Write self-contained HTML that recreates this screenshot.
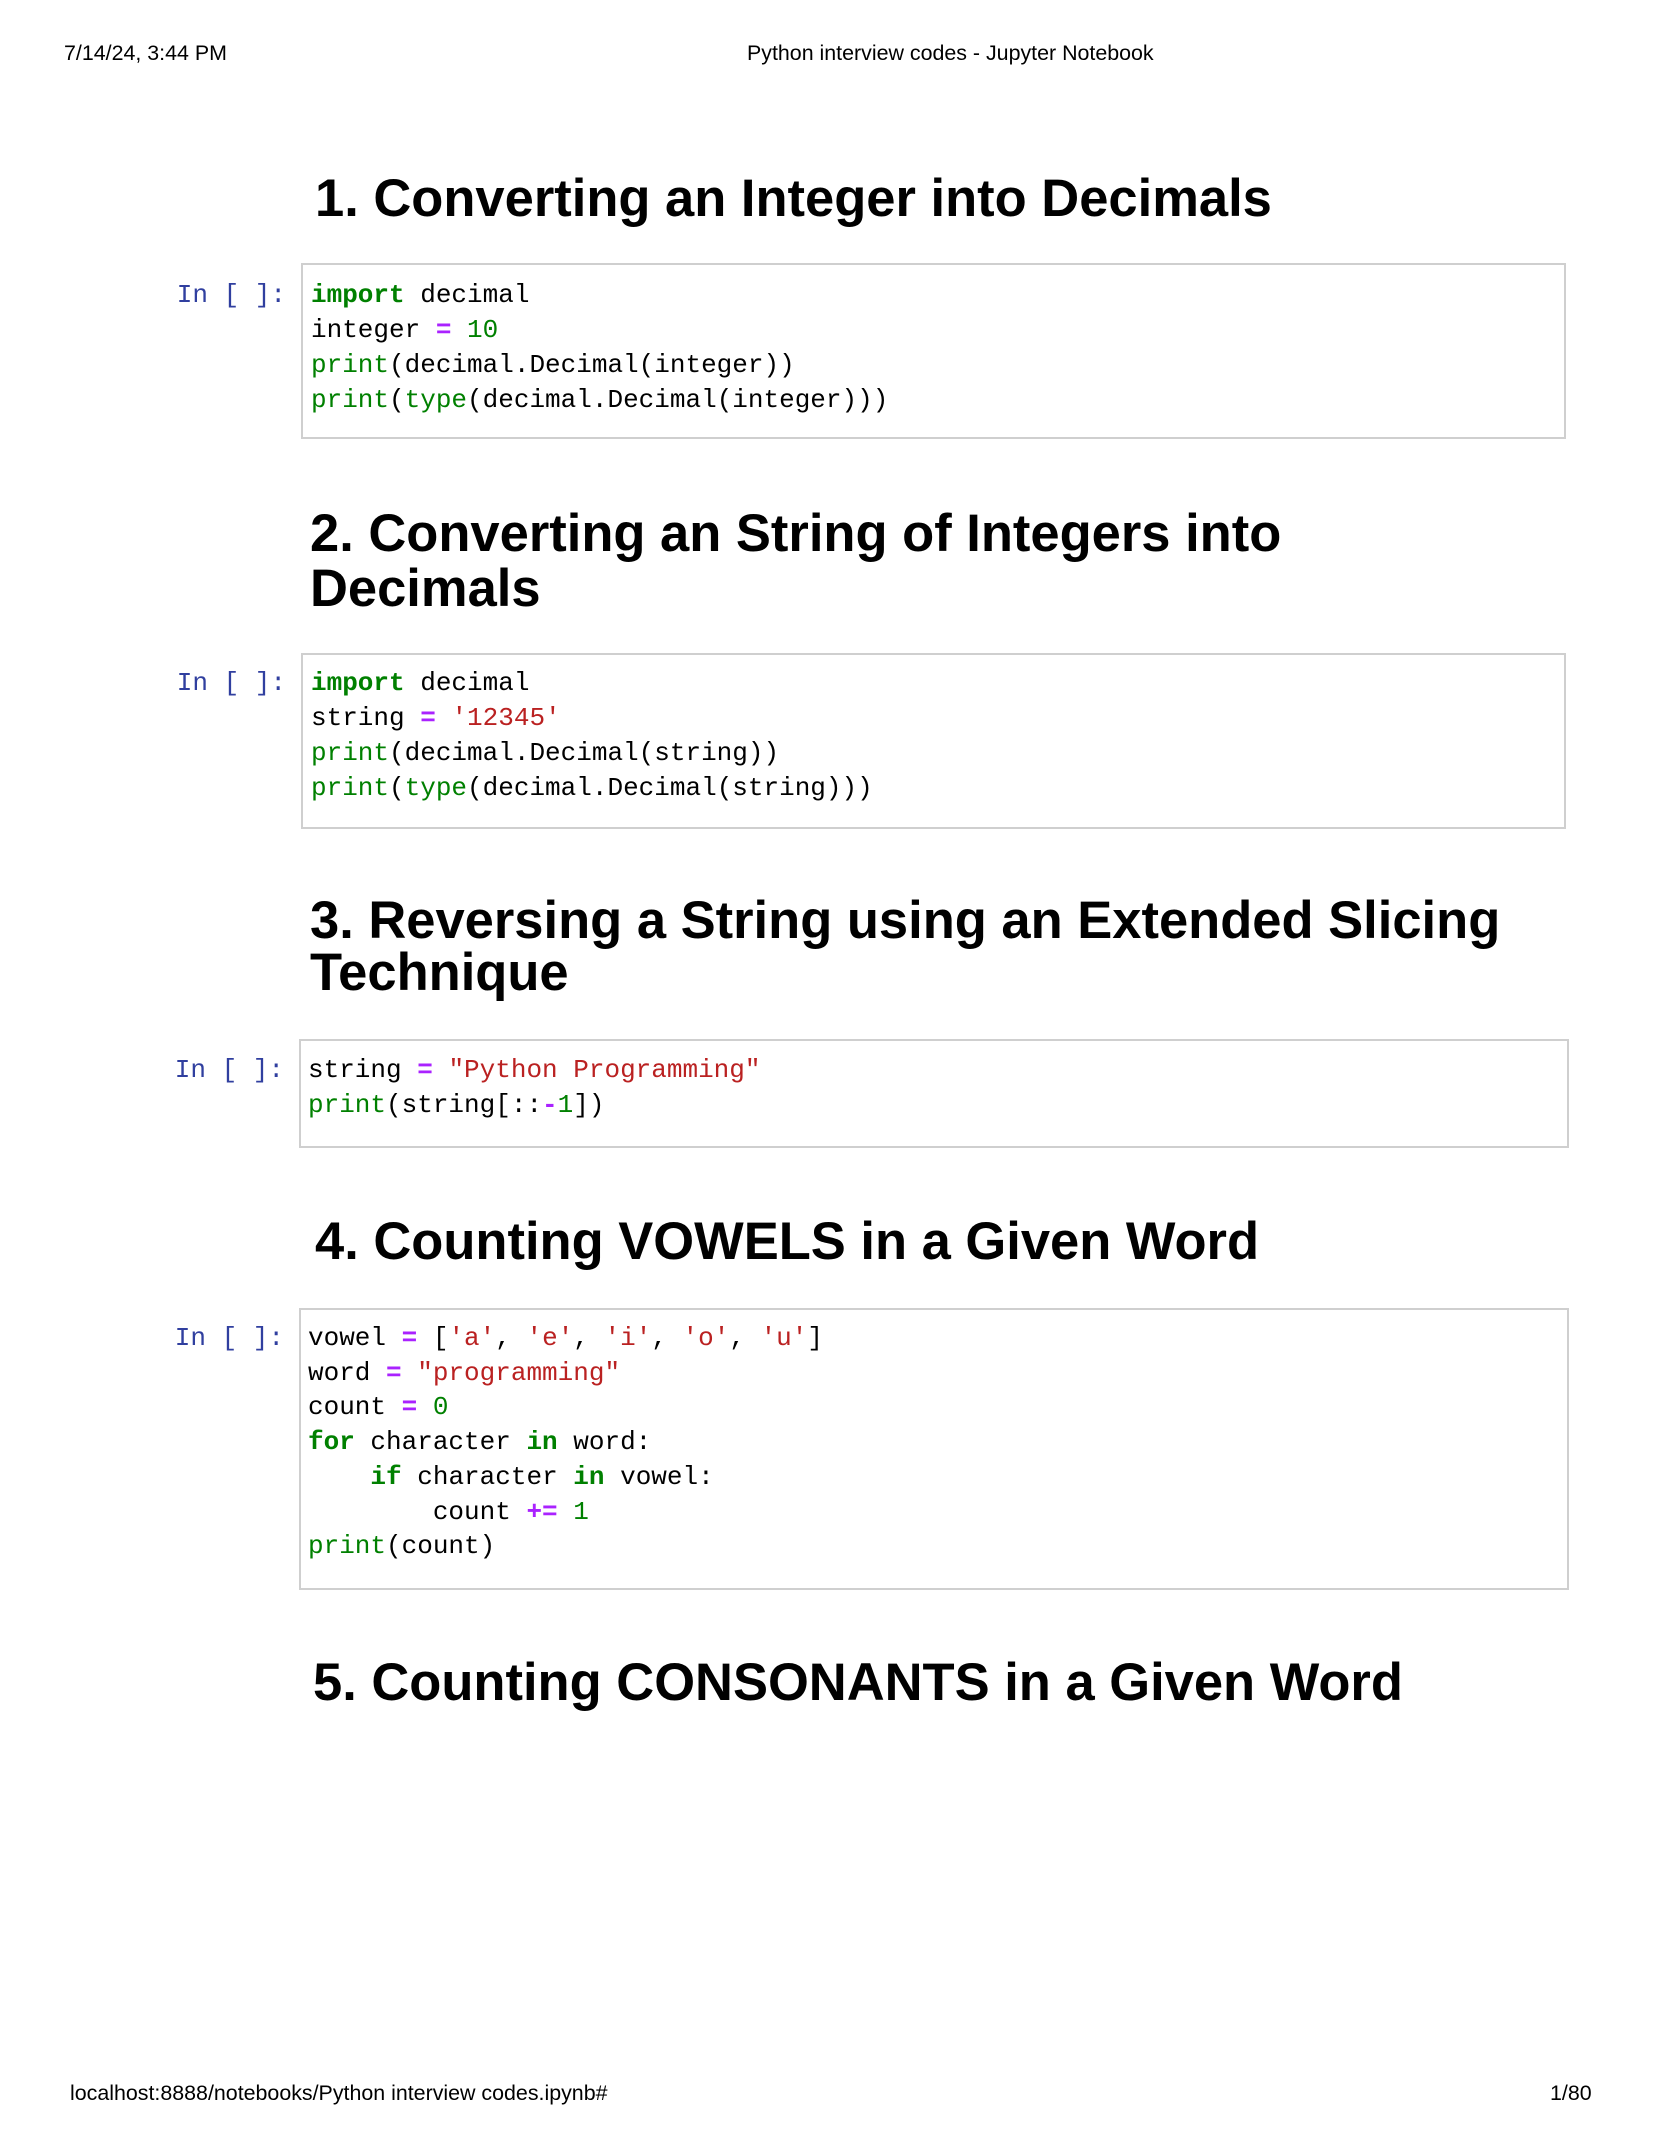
<!DOCTYPE html>
<html><head><meta charset="utf-8"><style>
body{margin:0;width:1653px;height:2139px;background:#fff;position:relative;font-family:"Liberation Sans",Arial,sans-serif;color:#000;overflow:hidden}
.a{position:absolute;white-space:pre}
.hd{font-size:21.4px;top:41px}
h1{position:absolute;margin:0;font-size:52.5px;font-weight:bold;white-space:pre;letter-spacing:0}
.box{position:absolute;border:2px solid #cfcfcf;background:#fff;box-sizing:border-box}
.code{position:absolute;font-family:"Liberation Mono","DejaVu Sans Mono",monospace;font-size:26px;white-space:pre;color:#000}
.pr{position:absolute;font-family:"Liberation Mono",monospace;font-size:26px;color:#303F9F;white-space:pre;text-align:right;width:140px}
.k{color:#008000;font-weight:bold}.b{color:#008000}.o{color:#AA22FF;font-weight:bold}.s{color:#BA2121}.n{color:#008000}
</style></head><body>
<div class="a hd" style="left:64px">7/14/24, 3:44 PM</div>
<div class="a hd" style="left:747px">Python interview codes - Jupyter Notebook</div>

<h1 style="left:315px;top:173px;line-height:51px">1. Converting an Integer into Decimals</h1>
<div class="box" style="left:301px;top:263px;width:1265px;height:176px"></div>
<div class="pr" style="left:146px;top:278px;line-height:35px">In [ ]:</div>
<div class="code" style="left:311px;top:278px;line-height:35px"><span class="k">import</span> decimal
integer <span class="o">=</span> <span class="n">10</span>
<span class="b">print</span>(decimal.Decimal(integer))
<span class="b">print</span>(<span class="b">type</span>(decimal.Decimal(integer)))</div>

<h1 style="left:310px;top:506px;line-height:55px">2. Converting an String of Integers into
Decimals</h1>
<div class="box" style="left:301px;top:653px;width:1265px;height:176px"></div>
<div class="pr" style="left:146px;top:666px;line-height:35px">In [ ]:</div>
<div class="code" style="left:311px;top:666px;line-height:35px"><span class="k">import</span> decimal
string <span class="o">=</span> <span class="s">'12345'</span>
<span class="b">print</span>(decimal.Decimal(string))
<span class="b">print</span>(<span class="b">type</span>(decimal.Decimal(string)))</div>

<h1 style="left:310px;top:895px;line-height:52px">3. Reversing a String using an Extended Slicing
Technique</h1>
<div class="box" style="left:299px;top:1039px;width:1270px;height:109px"></div>
<div class="pr" style="left:144px;top:1053px;line-height:35px">In [ ]:</div>
<div class="code" style="left:308px;top:1053px;line-height:35px">string <span class="o">=</span> <span class="s">"Python Programming"</span>
<span class="b">print</span>(string[::<span class="o">-</span><span class="n">1</span>])</div>

<h1 style="left:315px;top:1216px;line-height:51px">4. Counting VOWELS in a Given Word</h1>
<div class="box" style="left:299px;top:1308px;width:1270px;height:282px"></div>
<div class="pr" style="left:144px;top:1321px;line-height:34.7px">In [ ]:</div>
<div class="code" style="left:308px;top:1321px;line-height:34.7px">vowel <span class="o">=</span> [<span class="s">'a'</span>, <span class="s">'e'</span>, <span class="s">'i'</span>, <span class="s">'o'</span>, <span class="s">'u'</span>]
word <span class="o">=</span> <span class="s">"programming"</span>
count <span class="o">=</span> <span class="n">0</span>
<span class="k">for</span> character <span class="k">in</span> word:
    <span class="k">if</span> character <span class="k">in</span> vowel:
        count <span class="o">+=</span> <span class="n">1</span>
<span class="b">print</span>(count)</div>

<h1 style="left:313px;top:1657px;line-height:51px">5. Counting CONSONANTS in a Given Word</h1>

<div class="a hd" style="left:70px;top:2081px">localhost:8888/notebooks/Python interview codes.ipynb#</div>
<div class="a hd" style="left:1550px;top:2081px">1/80</div>
</body></html>
